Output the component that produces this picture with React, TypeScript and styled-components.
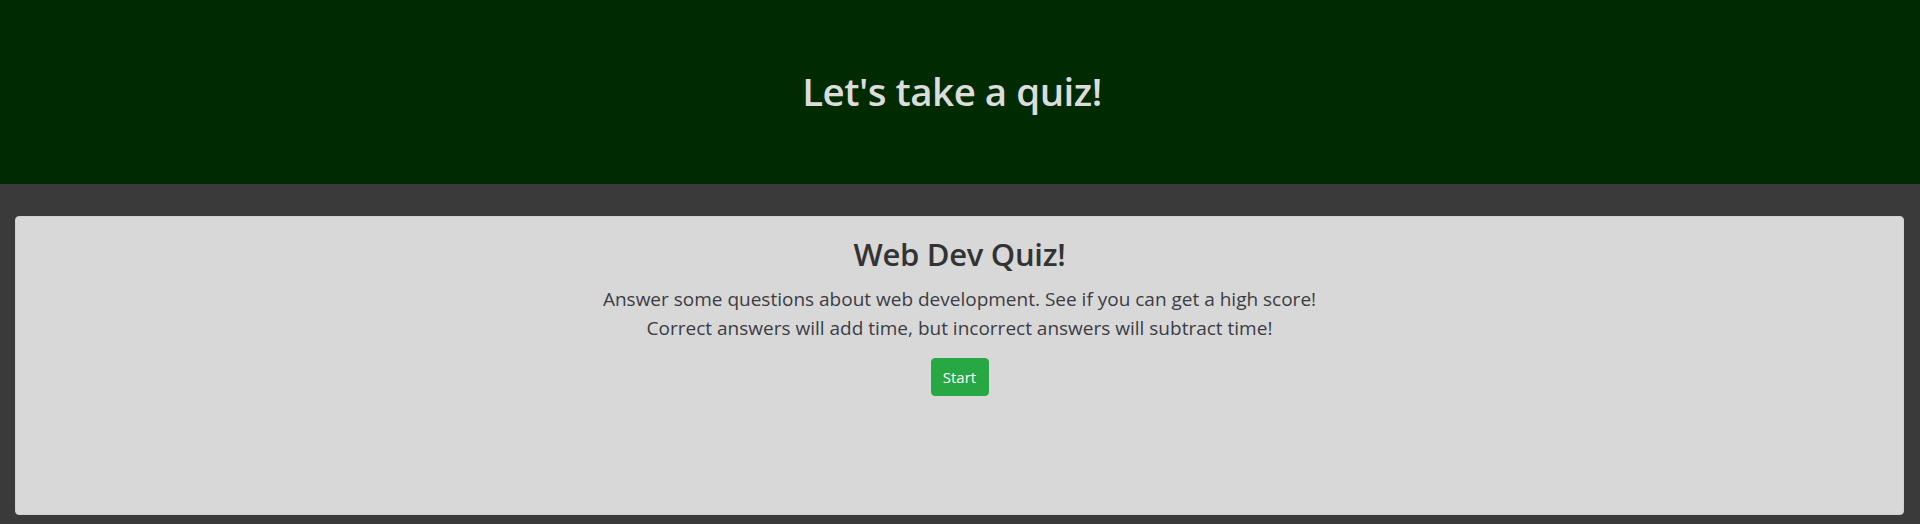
import styled, { createGlobalStyle } from 'styled-components';

const GlobalStyle = createGlobalStyle`
  html, body {
    margin: 0;
    padding: 0;
    background: #3a3a3a;
    font-family: "Open Sans", "Noto Sans", sans-serif;
  }
`;

const StyledHeader = styled.header`
  height: 184px;
  background: #002b00;
  display: flex;
  align-items: center;
  justify-content: center;
  padding-right: 16px;

  h1 {
    margin: 0 0 2px;
    color: #dcdcdc;
    font-size: 38.5px;
    font-weight: 600;
    letter-spacing: -0.5px;
  }
`;

const StyledMain = styled.main`
  padding: 32px 16px 9px 15px;
`;

const StyledCard = styled.section`
  background: #d8d8d8;
  border: 1px solid #cfcfcf;
  border-radius: 4px;
  min-height: 299px;
  box-sizing: border-box;
  padding: 19px 20px;
  text-align: center;
  color: #333;

  h2 {
    margin: 0 0 12px;
    font-size: 31px;
    font-weight: 600;
    line-height: 1.2;
    letter-spacing: -0.3px;
  }

  p {
    margin: 0;
    font-size: 19px;
    line-height: 29px;
    color: #3c3c44;
  }
`;

const StartButton = styled.button`
  margin-top: 15px;
  background: #28a745;
  border: 1px solid #28a745;
  border-radius: 4px;
  color: #fff;
  font-family: inherit;
  font-size: 15px;
  height: 38px;
  width: 58px;
  padding: 0;
  cursor: pointer;
`;

export default function App() {
  return (
    <>
      <GlobalStyle />
      <StyledHeader>
        <h1>Let's take a quiz!</h1>
      </StyledHeader>
      <StyledMain>
        <StyledCard>
          <h2>Web Dev Quiz!</h2>
          <p>Answer some questions about web development. See if you can get a high score!</p>
          <p>Correct answers will add time, but incorrect answers will subtract time!</p>
          <StartButton>Start</StartButton>
        </StyledCard>
      </StyledMain>
    </>
  );
}
